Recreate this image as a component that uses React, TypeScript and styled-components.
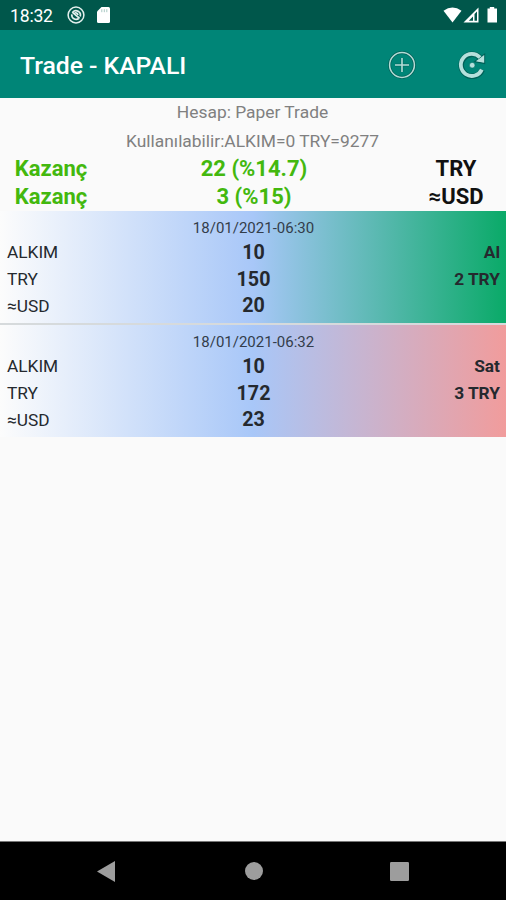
import React from "react";
import styled, { createGlobalStyle } from "styled-components";

const GlobalStyle = createGlobalStyle`
  * { box-sizing: border-box; }
  body { margin: 0; background: #fafafa; font-family: Roboto, "Noto Sans", sans-serif; }
`;

const Screen = styled.div`
  width: 506px;
  height: 900px;
  display: flex;
  flex-direction: column;
  background: #fafafa;
  overflow: hidden;
`;

const StatusBar = styled.header`
  flex: none;
  height: 30px;
  padding: 0 7px 0 10px;
  display: flex;
  align-items: center;
  justify-content: space-between;
  background: #00574b;
  color: #fff;
  svg { display: block; }
`;

const StatusGroup = styled.div<{ $gap: number }>`
  display: flex;
  align-items: center;
  gap: ${(p) => p.$gap}px;
`;

const Clock = styled.span`
  font-size: 17.6px;
  letter-spacing: -0.2px;
  line-height: 30px;
  font-weight: 400;
  width: 43px;
  margin-right: 2px;
  white-space: nowrap;
  padding-top: 1px;
`;

const AppBar = styled.div`
  flex: none;
  height: 68px;
  padding: 1px 20px 0 20px;
  display: flex;
  align-items: center;
  background: #008577;
`;

const Title = styled.h1`
  flex: 1;
  margin: 0;
  padding-top: 2px;
  font-size: 24.8px;
  line-height: 30px;
  font-weight: 500;
  letter-spacing: -0.05px;
  color: #fff;
`;

const Action = styled.button`
  border: 0;
  padding: 0;
  margin-left: 42px;
  background: none;
  svg { display: block; }
`;

const Summary = styled.section`
  flex: none;
  display: grid;
  grid-template-rows: 28px 29px 27px 29px;
`;

const AccountLine = styled.p`
  margin: 0;
  display: flex;
  align-items: center;
  justify-content: center;
  font-size: 17.4px;
  padding-right: 1px;
  color: #808080;
`;

const ProfitRow = styled.div`
  display: grid;
  grid-template-columns: 102px 1fr 100px;
  align-items: center;
  text-align: center;
  font-size: 22px;
  line-height: 26px;
  font-weight: 700;
  color: #43b80e;
`;

const Currency = styled.span`
  color: #111;
`;

const Orders = styled.main`
  flex: 1;
  display: flex;
  flex-direction: column;
  gap: 2px;
`;

const OrderCard = styled.article<{ $tone: string }>`
  height: 112px;
  padding: 7px 6px 0 7px;
  background: linear-gradient(90deg, #fcfcfc 0%, #a8c7f8 50%, ${(p) => p.$tone} 100%);
  box-shadow: 0 2px 0 #d6dadc;
  &:last-child { box-shadow: none; }
`;

const OrderDate = styled.time`
  display: block;
  height: 21px;
  text-align: center;
  font-size: 15px;
  line-height: 21px;
  color: #333d4b;
`;

const OrderRow = styled.div`
  display: grid;
  grid-template-columns: 1fr 1fr 1fr;
  align-items: center;
  height: 26.7px;
  color: #25292e;
`;

const Asset = styled.span`
  font-size: 17.3px;
`;

const Amount = styled.span`
  text-align: center;
  font-size: 19.7px;
  font-weight: 700;
`;

const Side = styled.span`
  text-align: right;
  font-size: 17.3px;
  font-weight: 700;
`;

const NavBar = styled.nav`
  flex: none;
  height: 59px;
  border-top: 1px solid #777;
  display: grid;
  grid-template-columns: 180px 146px 180px;
  align-items: center;
  justify-items: center;
  background: #000;
`;

const NavButton = styled.button<{ $shift: number }>`
  border: 0;
  padding: 0;
  margin-left: ${(p) => p.$shift}px;
  background: none;
  svg { display: block; }
`;

const profits = [
  { label: "Kazanç", value: "22 (%14.7)", currency: "TRY" },
  { label: "Kazanç", value: "3 (%15)", currency: "≈USD" },
];

const orders = [
  {
    date: "18/01/2021-06:30",
    tone: "#0aaa68",
    rows: [["ALKIM", "10", "Al"], ["TRY", "150", "2 TRY"], ["≈USD", "20", ""]],
  },
  {
    date: "18/01/2021-06:32",
    tone: "#f19c9c",
    rows: [["ALKIM", "10", "Sat"], ["TRY", "172", "3 TRY"], ["≈USD", "23", ""]],
  },
];

export default function App() {
  return (
    <>
      <GlobalStyle />
      <Screen>
        <StatusBar>
          <StatusGroup $gap={12}>
            <Clock>18:32</Clock>
            <svg width="18" height="18" viewBox="0 0 18 18" fill="none" stroke="#e4f0ee">
              <circle cx="9" cy="9" r="7.9" strokeWidth="1.5" />
              <path d="M5.7 6.2A4.4 4.4 0 0 1 13.2 10.4M4.8 8.4A4.4 4.4 0 0 0 11.8 12.5" strokeWidth="1.7" />
              <path d="M5.2 6.2L12.6 12.4M7.6 6.8Q10.5 6.4 11 9" strokeWidth="1.7" />
            </svg>
            <svg width="13" height="16" viewBox="0 0 13 16">
              <path d="M4.5 0H11.5Q13 0 13 1.5V14.5Q13 16 11.5 16H1.5Q0 16 0 14.5V4.5Z" fill="#fff" />
              <path d="M4.8 2.2v3M7.3 2.2v3M9.8 2.2v3" stroke="#a9c9c4" strokeWidth="1" />
            </svg>
          </StatusGroup>
          <StatusGroup $gap={0}>
            <svg width="56" height="18" viewBox="0 0 56 18">
              <path d="M0.5 4.8Q9.5-1.8 18.5 4.8L9.5 16.5Z" fill="#fff" />
              <path d="M20.5 16.5L35.5 1.5V16.5Z" fill="#fff" />
              <path d="M31.5 8V14.8H34V5.5Z" fill="#00574b" />
              <path d="M25.8 14.8L30 10.5V14.8Z" fill="#00574b" />
              <path d="M46.8 1H51.2V2.5H54V16.5H44.5V2.5H46.8Z" fill="#fff" />
            </svg>
          </StatusGroup>
        </StatusBar>
        <AppBar>
          <Title>Trade - KAPALI</Title>
          <Action aria-label="Ekle">
            <svg width="28" height="28" viewBox="0 0 28 28" fill="none">
              <circle cx="14" cy="14" r="12.4" stroke="#006158" strokeWidth="3" />
              <path d="M14 7v14M7 14h14" stroke="#006f65" strokeWidth="3" />
              <circle cx="14" cy="14" r="12.4" stroke="#b5dcd6" strokeWidth="1.5" />
              <path d="M14 7v14M7 14h14" stroke="#b5dcd6" strokeWidth="1.6" />
            </svg>
          </Action>
          <Action aria-label="Yenile">
            <svg width="28" height="28" viewBox="0 0 28 28" fill="none">
              <path d="M21.6 6.2A11 11 0 1 0 24.2 18.8" stroke="#006158" strokeWidth="5.6" />
              <path d="M26.4 3.6V12.2L17.2 10.6Z" fill="#b5e0dc" stroke="#006158" strokeWidth="1.6" />
              <path d="M22 6.6A11 11 0 1 0 23.8 18.6" stroke="#b5e0dc" strokeWidth="3.8" />
              <path d="M26.2 4V11.8L17.8 10.2Z" fill="#b5e0dc" />
              <circle cx="14.2" cy="14.2" r="2.8" fill="#b5e0dc" stroke="#006f65" strokeWidth=".6" />
            </svg>
          </Action>
        </AppBar>
        <Summary>
          <AccountLine>Hesap: Paper Trade</AccountLine>
          <AccountLine>Kullanılabilir:ALKIM=0 TRY=9277</AccountLine>
          {profits.map((p) => (
            <ProfitRow key={p.currency}>
              <span>{p.label}</span>
              <span>{p.value}</span>
              <Currency>{p.currency}</Currency>
            </ProfitRow>
          ))}
        </Summary>
        <Orders>
          {orders.map((o) => (
            <OrderCard key={o.date} $tone={o.tone}>
              <OrderDate>{o.date}</OrderDate>
              {o.rows.map(([asset, amount, side]) => (
                <OrderRow key={asset}>
                  <Asset>{asset}</Asset>
                  <Amount>{amount}</Amount>
                  <Side>{side}</Side>
                </OrderRow>
              ))}
            </OrderCard>
          ))}
        </Orders>
        <NavBar>
          <NavButton $shift={31} aria-label="Geri">
            <svg width="18" height="21" viewBox="0 0 18 21"><path d="M0 10.5L18 0V21Z" fill="#9d9d9d" /></svg>
          </NavButton>
          <NavButton $shift={1} aria-label="Ana ekran">
            <svg width="18" height="18" viewBox="0 0 18 18"><circle cx="9" cy="9" r="9" fill="#9d9d9d" /></svg>
          </NavButton>
          <NavButton $shift={-33} aria-label="Son uygulamalar">
            <svg width="19" height="19" viewBox="0 0 19 19"><rect width="19" height="19" rx="1.2" fill="#9d9d9d" /></svg>
          </NavButton>
        </NavBar>
      </Screen>
    </>
  );
}
